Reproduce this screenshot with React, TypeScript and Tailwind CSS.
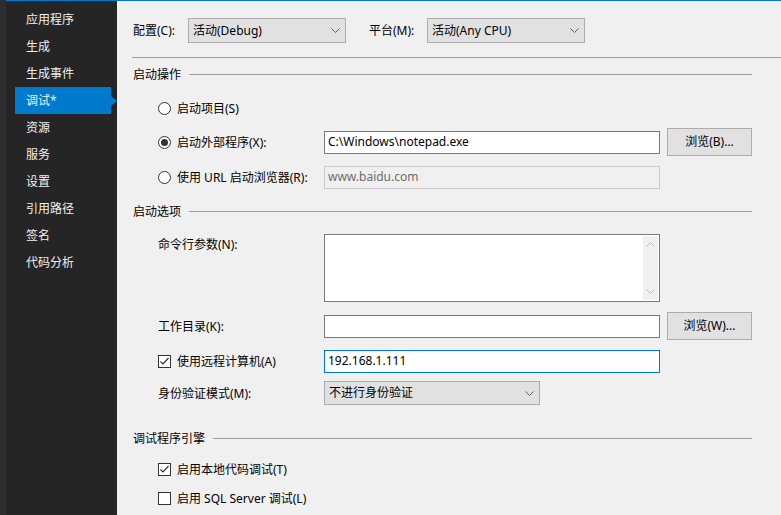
import { ReactNode } from 'react';

const font = { fontFamily: '"Noto Sans", "Noto Sans CJK SC", sans-serif' };

const navItems = ['应用程序', '生成', '生成事件', '调试*', '资源', '服务', '设置', '引用路径', '签名', '代码分析'];

const Chevron = ({ up = false, color = '#606060' }: { up?: boolean; color?: string }) => (
  <svg width="9" height="5" viewBox="0 0 9 5" className={up ? 'rotate-180' : ''}>
    <path d="M0.5 0.5 L4.5 4.5 L8.5 0.5" fill="none" stroke={color} strokeWidth="1" />
  </svg>
);

const Select = ({ value, width }: { value: string; width: string }) => (
  <div className={`flex h-full items-center justify-between border border-[#adadad] bg-[#e1e1e1] pl-[4px] pr-[5px] ${width}`}>
    <span>{value}</span>
    <Chevron />
  </div>
);

const Button = ({ children }: { children: ReactNode }) => (
  <div className="flex h-[28px] w-[85px] items-center justify-center border border-[#adadad] bg-[#e1e1e1]">
    {children}
  </div>
);

const Radio = ({ checked = false }: { checked?: boolean }) => (
  <div className="flex h-[13px] w-[13px] items-center justify-center rounded-full border border-[#333] bg-white">
    {checked && <div className="h-[7px] w-[7px] rounded-full bg-[#333]" />}
  </div>
);

const Checkbox = ({ checked = false }: { checked?: boolean }) => (
  <div className="flex h-[13px] w-[13px] items-center justify-center border border-[#333] bg-white">
    {checked && (
      <svg width="11" height="11" viewBox="0 0 11 11">
        <path d="M1.5 5.5 L4 8 L9.5 2" fill="none" stroke="#333" strokeWidth="1.2" />
      </svg>
    )}
  </div>
);

const Heading = ({ title, className }: { title: string; className: string }) => (
  <div className={`flex h-[20px] items-center pr-[29px] ${className}`}>
    <span className="mr-[8px] pt-px">{title}</span>
    <div className="h-px flex-1 bg-[#a0a0a0]" />
  </div>
);

export default function App() {
  return (
    <div className="flex h-[515px] w-[781px] overflow-hidden text-[12px] text-black" style={font}>
      {/* 左侧导航 */}
      <div className="flex w-[117px] shrink-0 bg-[#252526]">
        <div className="w-[6px] bg-[#2d2d30]" />
        <div className="flex-1 border-t border-[#007acc] pt-[5px]">
          {navItems.map((item, i) => (
            <div key={item} className="relative flex h-[27px] items-center">
              <div
                className={`ml-[9px] flex h-full w-[96px] items-center pl-[11px] text-[#f1f1f1] ${
                  i === 3 ? 'bg-[#007acc]' : ''
                }`}
              >
                {item}
              </div>
              {i === 3 && (
                <div className="h-0 w-0 border-y-[5px] border-l-[6px] border-y-transparent border-l-[#007acc]" />
              )}
            </div>
          ))}
        </div>
      </div>

      {/* 内容 */}
      <div className="flex-1 border-t border-[#007acc] bg-[#f0f0f0] pt-[17px]">
        <div className="flex h-[25px] items-center pl-[16px]">
          <span className="w-[55px]">配置(C):</span>
          <Select value="活动(Debug)" width="w-[158px]" />
          <span className="ml-[23px] w-[58px]">平台(M):</span>
          <Select value="活动(Any CPU)" width="w-[158px]" />
        </div>

        <div className="ml-[15px] mt-[14px] h-px bg-[#a0a0a0]" />

        <Heading title="启动操作" className="mt-[6px] pl-[16px]" />

        <div className="mt-[12px] flex h-[24px] items-center pl-[41px]">
          <Radio />
          <span className="ml-[6px] pt-px">启动项目(S)</span>
        </div>

        <div className="mt-[8px] flex h-[28px] items-center pl-[41px]">
          <Radio checked />
          <span className="ml-[6px] w-[147px] pt-px">启动外部程序(X):</span>
          <div className="flex h-[23px] w-[336px] items-center border border-[#7a7a7a] bg-white pl-[3px]">
            C:\Windows\notepad.exe
          </div>
          <div className="ml-[7px]">
            <Button>浏览(B)...</Button>
          </div>
        </div>

        <div className="mt-[9px] flex h-[24px] items-center pl-[41px]">
          <Radio />
          <span className="ml-[6px] w-[147px] pt-px">使用 URL 启动浏览器(R):</span>
          <div className="flex h-[23px] w-[336px] items-center border border-[#cccccc] bg-[#f0f0f0] pl-[3px] text-[#6d6d6d]">
            www.baidu.com
          </div>
        </div>

        <Heading title="启动选项" className="mt-[12px] pl-[16px]" />

        <div className="mt-[13px] flex pl-[41px]">
          <span className="w-[166px] pt-[2px]">命令行参数(N):</span>
          <div className="flex h-[68px] w-[336px] justify-end border border-[#7a7a7a] bg-white p-px">
            <div className="flex w-[15px] flex-col items-center justify-between bg-[#f0f0f0] py-[6px]">
              <Chevron up color="#c0c0c0" />
              <Chevron color="#c0c0c0" />
            </div>
          </div>
        </div>

        <div className="mt-[10px] flex h-[28px] items-center pl-[41px]">
          <span className="w-[166px] pt-px">工作目录(K):</span>
          <div className="h-[23px] w-[336px] border border-[#7a7a7a] bg-white" />
          <div className="ml-[7px]">
            <Button>浏览(W)...</Button>
          </div>
        </div>

        <div className="mt-[9px] flex h-[24px] items-center pl-[41px]">
          <Checkbox checked />
          <span className="ml-[6px] w-[147px] pt-px">使用远程计算机(A)</span>
          <div className="flex h-[23px] w-[336px] items-center border border-[#0078d7] bg-white pl-[3px]">
            192.168.1.111
          </div>
        </div>

        <div className="mt-[8px] flex h-[24px] items-center pl-[41px]">
          <span className="w-[166px] pt-px">身份验证模式(M):</span>
          <Select value="不进行身份验证" width="w-[216px]" />
        </div>

        <Heading title="调试程序引擎" className="mt-[23px] pl-[16px]" />

        <div className="mt-[9px] flex h-[24px] items-center pl-[41px]">
          <Checkbox checked />
          <span className="ml-[6px] pt-px">启用本地代码调试(T)</span>
        </div>

        <div className="mt-[5px] flex h-[24px] items-center pl-[41px]">
          <Checkbox />
          <span className="ml-[6px] pt-px">启用 SQL Server 调试(L)</span>
        </div>
      </div>
    </div>
  );
}
